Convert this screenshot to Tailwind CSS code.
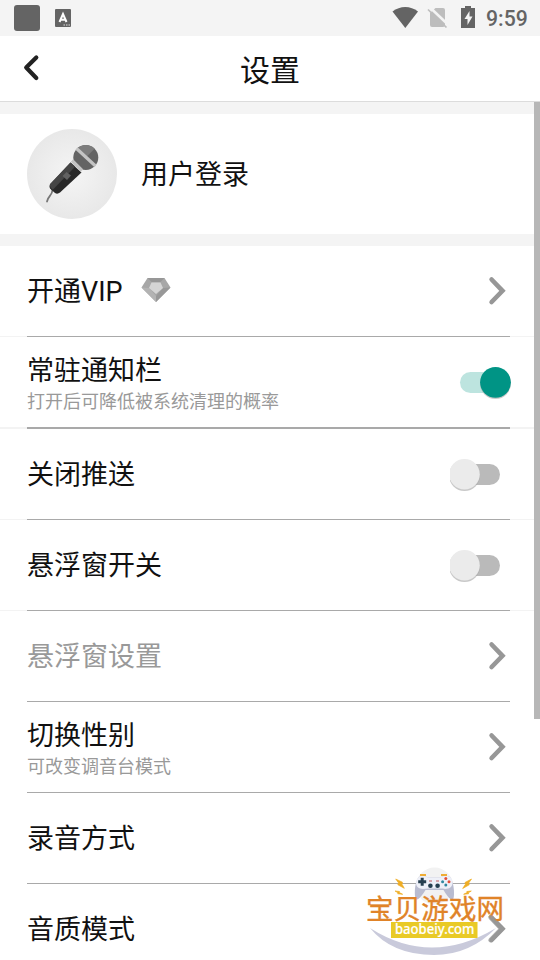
<!DOCTYPE html>
<html lang="zh-CN">
<head>
<meta charset="utf-8">
<title>设置</title>
<script src="https://cdn.jsdelivr.net/npm/@tailwindcss/browser@4"></script>
</head>
<body class="relative flex h-[960px] w-[540px] flex-col overflow-hidden bg-white font-['Noto_Sans_CJK_SC',sans-serif] text-[#111]">
<svg class="hidden"><symbol id="chev" viewBox="0 0 18 30"><path d="M3.600 3.500 14.500 14.800 3.600 26" fill="none" stroke="#979797" stroke-width="4.600" stroke-linecap="round" stroke-linejoin="miter"/></symbol></svg>

<div class="flex h-9 shrink-0 items-center bg-[#f4f4f4] pl-[14px] pr-3">
  <div class="h-[26px] w-[26px] rounded-[3px] bg-[#646464]"></div>
  <svg class="ml-[15px] h-[18px] w-4" viewBox="0 0 16 18"><rect width="16" height="18" rx="1" fill="#646464"/><path d="M4.500 13 8 5l3.500 8M5.600 10.700h4.800" fill="none" stroke="#fff" stroke-width="2"/><path d="M8.500 16h1.500M11 16h1.500M13.500 16H15" stroke="#ddd" stroke-width="1.200"/></svg>
  <div class="grow"></div>
  <svg class="mr-[-2px] h-9 w-[96px] translate-x-0.5" viewBox="0 0 96 36"><path d="M.5 11.500C8 5.500 18.500 5.500 26 11.500L13.300 28Z" fill="#646464"/><path d="M43.500 8H51Q53 8 53 10V25Q53 27 51 27H40Q38 27 38 25V13Z" fill="#bdbdbd"/><path d="m38 7.500 19 18" stroke="#f4f4f4" stroke-width="2.500"/><path d="m36 9.500 18.500 18" stroke="#bdbdbd" stroke-width="1.700"/><path d="M69 8h4V6h6v2h4v20H69Z" fill="#646464"/><path d="m77.500 11-5 8h3v6l5-8.500h-3Z" fill="#f4f4f4"/></svg>
  <span class="ml-0.5 w-[42px] whitespace-nowrap font-[Roboto] text-[21.200px] font-medium leading-[37px] text-[#646464]">9:59</span>
</div>

<header class="grid h-[66px] shrink-0 grid-cols-[100px_1fr_100px] items-center border-b border-[#dcdcdc]">
  <svg class="ml-[22px] h-[30px] w-5 -translate-y-px" viewBox="0 0 20 30"><path d="M14.300 4.500 4.200 14.500l10.100 10.500" fill="none" stroke="#222" stroke-width="4.200" stroke-linecap="round" stroke-linejoin="round"/></svg>
  <h1 class="pb-px text-center text-[30px] leading-[60px]">设置</h1>
</header>

<section class="flex h-[144px] shrink-0 items-center border-y-[12px] border-[#f4f4f4] pl-[27px]">
  <svg class="h-[90px] w-[90px]" viewBox="0 0 90 90">
    <defs><radialGradient id="av"><stop stop-color="#f5f5f5"/><stop offset="1" stop-color="#e8e8e8"/></radialGradient></defs>
    <circle cx="45" cy="45" r="45" fill="url(#av)"/>
    <path d="M25.500 61C25 67 21 67 20 72.500" fill="none" stroke="#777" stroke-width="1.800" stroke-linecap="round"/>
    <path d="m43.500 33.500 11 10-21.500 20q-2.500 2-5 .5l-4-3.500q-2.500-2.500-1-5Z" fill="#282828"/>
    <path d="m43.500 33.500 4.800 4-22.500 23.200-1.300-1.200q-2.500-2.500-1-5Z" fill="#454545"/>
    <path d="m39.500 43 4.500 3.500-4 4.500-4.500-4Z" fill="#626262"/>
    <circle cx="58.800" cy="28.500" r="12.500" fill="#646464"/>
    <path d="M50 19.700A12.500 12.500 0 0 1 67.600 19.700L58.800 28.500Z" fill="#7c7c7c"/>
    <path d="m49.500 19.500 19 17.500M45 31.500l10 10" stroke="#c4c4c4" stroke-width="3.200"/>
  </svg>
  <span class="ml-6 pb-[3px] text-[27px] leading-10">用户登录</span>
</section>

<main class="flex flex-col text-[27px] leading-10">
  <div class="flex h-[91px] flex-col">
    <div class="flex grow items-center pl-[27px] pr-[33px]"><span class="w-[95px] whitespace-nowrap pb-px">开通<span class="font-[Roboto]">VIP</span></span>
      <svg class="ml-[19px] h-[26px] w-[30px] -translate-y-px" viewBox="0 0 30 26"><path d="M6.500 1h17L29.500 10.500 15 25 .5 10.500Z" fill="#a7a7a7"/><path d="M6.500 1h17l-4 4h-9Z" fill="#979797"/><path d="M.5 10.500 8 11l7 8v6Z" fill="#b3b3b3"/><path d="M29.500 10.500 22 11l-7 8v6Z" fill="#989898"/><path d="M10.500 5.500h9l2.500 5.500-7 6-7-6Z" fill="#d5d5d5"/></svg>
      <svg class="ml-auto h-[30px] w-[18px] -translate-x-px"><use href="#chev"/></svg></div>
    <div class="flex h-px"><i class="w-[27px] bg-[#f3f3f3]"></i><i class="w-[483px] bg-[#a9a9a9]"></i><i class="grow bg-[#f3f3f3]"></i></div>
  </div>
  <div class="flex h-[92px] flex-col">
    <div class="flex grow items-center pl-[27px] pr-[29px]"><div><div class="h-[34px] leading-[35px]">常驻通知栏</div><div class="h-7 text-[18px] leading-[31px] text-[#999]">打开后可降低被系统清理的概率</div></div>
      <svg class="ml-auto h-10 w-[52px] translate-y-px" viewBox="0 0 52 40"><rect x="1" y="9" width="44" height="21" rx="10.500" fill="#bde4df"/><circle cx="36.500" cy="20.500" r="15.500" fill="#aaa" opacity=".65"/><circle cx="36.500" cy="19.300" r="15.400" fill="#009485"/></svg></div>
    <div class="flex h-0.5"><i class="w-[27px] bg-[#f3f3f3]"></i><i class="w-[483px] bg-[#a9a9a9]"></i><i class="grow bg-[#f3f3f3]"></i></div>
  </div>
  <div class="flex h-[91px] flex-col">
    <div class="flex grow items-center pl-[27px] pr-10"><span class="pb-[3px]">关闭推送</span>
      <svg class="ml-auto h-10 w-[50px]" viewBox="0 0 50 40"><rect x="8" y="10" width="42" height="21" rx="10.500" fill="#bababa"/><circle cx="14.500" cy="21.500" r="15.500" fill="#aaa" opacity=".65"/><circle cx="14.500" cy="20.300" r="15.300" fill="#ebebeb"/></svg></div>
    <div class="flex h-px"><i class="w-[27px] bg-[#f3f3f3]"></i><i class="w-[483px] bg-[#a9a9a9]"></i><i class="grow bg-[#f3f3f3]"></i></div>
  </div>
  <div class="flex h-[91px] flex-col">
    <div class="flex grow items-center pl-[27px] pr-10"><span class="pb-[3px]">悬浮窗开关</span>
      <svg class="ml-auto h-10 w-[50px]" viewBox="0 0 50 40"><rect x="8" y="10" width="42" height="21" rx="10.500" fill="#bababa"/><circle cx="14.500" cy="21.500" r="15.500" fill="#aaa" opacity=".65"/><circle cx="14.500" cy="20.300" r="15.300" fill="#ebebeb"/></svg></div>
    <div class="flex h-px"><i class="w-[27px] bg-[#f3f3f3]"></i><i class="w-[483px] bg-[#a9a9a9]"></i><i class="grow bg-[#f3f3f3]"></i></div>
  </div>
  <div class="flex h-[91px] flex-col">
    <div class="flex grow items-center pl-[27px] pr-[33px] text-[#999]"><span class="pb-[3px]">悬浮窗设置</span><svg class="ml-auto h-[30px] w-[18px] -translate-x-px"><use href="#chev"/></svg></div>
    <div class="ml-[27px] h-px w-[483px] bg-[#a9a9a9]"></div>
  </div>
  <div class="flex h-[91px] flex-col">
    <div class="flex grow items-center pl-[27px] pr-[33px]"><div><div class="h-[34px] leading-[35px]">切换性别</div><div class="h-7 text-[18px] leading-[31px] text-[#999]">可改变调音台模式</div></div><svg class="ml-auto h-[30px] w-[18px] -translate-x-px"><use href="#chev"/></svg></div>
    <div class="ml-[27px] h-px w-[483px] bg-[#a9a9a9]"></div>
  </div>
  <div class="flex h-[91px] flex-col">
    <div class="flex grow items-center pl-[27px] pr-[33px]"><span class="pb-[3px]">录音方式</span><svg class="ml-auto h-[30px] w-[18px] -translate-x-px"><use href="#chev"/></svg></div>
    <div class="ml-[27px] h-px w-[483px] bg-[#a9a9a9]"></div>
  </div>
  <div class="flex h-[90px] items-center pl-[27px] pr-[33px]"><span class="pb-[3px]">音质模式</span><svg class="ml-auto h-[30px] w-[18px] -translate-x-px"><use href="#chev"/></svg></div>
</main>

<div class="absolute right-0 top-[102px] h-[617px] w-1.5 bg-[#b7b7b7]"></div>

<svg class="absolute left-[355px] top-[860px] h-[100px] w-[160px]" viewBox="0 0 160 100">
  <path d="M15 68Q76 107 141 68 115 95 79 95 37 95 15 68Z" fill="#c9cadb"/>
  <circle cx="79.500" cy="26" r="18.500" fill="#f2f2f2"/>
  <path d="M64 17Q68 14.500 73 17.500H85Q90 14.500 95 17C98.500 21 100 33 98.500 38.500 96.500 42 92 36 88.500 30H70.500C67 36 62 42 60.500 38.500 59 33 60 21 64 17Z" fill="#b9bcd0"/>
  <path d="M64 17Q68 14.500 73 17.500H85Q90 14.500 95 17C98 19 98.500 24 96 27 92 30 88 28.500 86 28.500H73C70 28.500 66 30 62.500 27 60 24 61 19 64 17Z" fill="#eef0f8"/>
  <path d="M65 15h6M86 15h6" stroke="#efad35" stroke-width="1.800"/>
  <path d="M67.200 17.700v8M63.200 21.700h8" stroke="#263f50" stroke-width="3"/>
  <path d="M74 21h3M81 21h3" stroke="#c0595f" stroke-width="1"/>
  <g fill="#263f50"><circle cx="75.400" cy="25.700" r="2.300"/><circle cx="82.600" cy="25.700" r="2.300"/></g>
  <g fill="#e34e3b"><circle cx="90.800" cy="18.500" r="1.500"/><circle cx="94" cy="21.700" r="1.500"/></g><g fill="#3188a0"><circle cx="87.600" cy="21.700" r="1.500"/><circle cx="90.800" cy="24.900" r="1.500"/></g>
  <path d="m40.700 19 6.800 3.300-.5 1.900 2.300 4.100-6.500-3.600.8-1.800ZM40 31l4.500.5-.3 1 3.500 1.800-5-.5.3-1ZM116.500 19l-6.500 3.500.4 1.800-2.700 4.200 6.500-3.700-.5-1.800ZM116.300 31l-4.500.5.3 1-3.500 1.800 5-.5-.3-1Z" fill="#efad24" stroke="#efad24" stroke-width=".7"/>
  <text x="11" y="58.500" font-family="Noto Sans CJK SC, sans-serif" font-size="27.500" fill="#e08328" stroke="#e08328" stroke-width=".35" textLength="138">宝贝游戏网</text>
  <rect x="36" y="62" width="86.500" height="16" fill="#e9ca26"/>
  <text x="40" y="74" font-family="Noto Sans, sans-serif" font-size="14.500" font-weight="500" fill="#fff" stroke="#fff" stroke-width=".2" textLength="79.500" lengthAdjust="spacingAndGlyphs">baobeiy.com</text>
  <path d="M135.600 57.500 146.500 68.800 135.600 80" fill="none" stroke="#979797" stroke-width="4.600" stroke-linecap="round" opacity=".75"/>
</svg>
</body>
</html>
